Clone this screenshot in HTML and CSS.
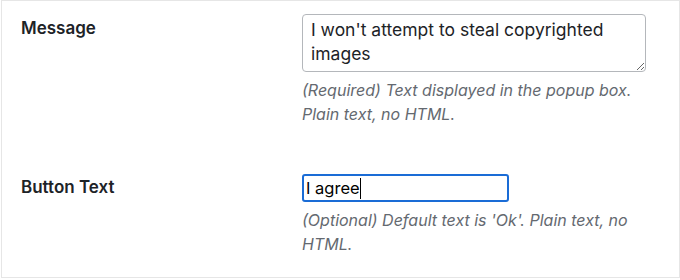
FILE: index.html
```html
<!DOCTYPE html>
<html lang="en">
<head>
<meta charset="utf-8">
<title>Settings</title>
<link rel="stylesheet" href="styles.css">
</head>
<body>
<div class="panel">
  <div class="row row-message">
    <div class="label">Message</div>
    <div class="field">
      <textarea class="textarea" rows="2">I won't attempt to steal copyrighted images</textarea>
      <p class="desc">(Required) Text displayed in the popup box. Plain text, no HTML.</p>
    </div>
  </div>
  <div class="row row-button">
    <div class="label">Button Text</div>
    <div class="field">
      <div class="input"><span class="val">I agree</span><span class="caret"></span></div>
      <p class="desc">(Optional) Default text is 'Ok'. Plain text, no HTML.</p>
    </div>
  </div>
</div>
</body>
</html>
```
FILE: styles.css
```css
html, body {
  margin: 0;
  padding: 0;
  background: #ffffff;
}
body {
  font-family: Inter, "Noto Sans", "Liberation Sans", sans-serif;
  color: #1d2327;
  width: 680px;
  height: 280px;
  overflow: hidden;
}
.panel {
  margin-left: 1px;
  width: 677px;
  height: 276px;
  border: 1px solid #e6e6e6;
  box-sizing: content-box;
}
.row {
  display: grid;
  grid-template-columns: 281px 345px;
  padding-left: 19px;
}
.row-message {
  padding-top: 13px;
}
.row-button {
  padding-top: 48px;
}
.label {
  font-size: 17px;
  font-weight: 600;
  color: #1d2327;
  line-height: 20px;
}
.row-message .label {
  padding-top: 4px;
}
.row-button .label {
  padding-top: 3px;
}
.textarea {
  display: block;
  box-sizing: border-box;
  width: 344px;
  height: 58px;
  margin: 0;
  padding: 3px 8px 0;
  border: 1px solid #b4b7bb;
  border-radius: 4px;
  font-family: Inter, "Noto Sans", "Liberation Sans", sans-serif;
  font-size: 17.5px;
  line-height: 24px;
  color: #1d2327;
  resize: vertical;
  overflow: hidden;
}
.desc {
  margin: 0;
  font-size: 16px;
  font-style: italic;
  line-height: 24px;
  color: #646970;
  width: 345px;
}
.row-message .desc {
  margin-top: 6px;
}
.row-button .desc {
  margin-top: 6px;
}
.input {
  box-sizing: border-box;
  width: 207px;
  height: 28px;
  border: 2px solid #1a6cd6;
  border-radius: 3px;
  display: flex;
  align-items: center;
  padding-left: 2px;
  font-size: 16.5px;
  color: #000;
}
.caret {
  display: inline-block;
  width: 1px;
  height: 21px;
  background: #000;
}
```
